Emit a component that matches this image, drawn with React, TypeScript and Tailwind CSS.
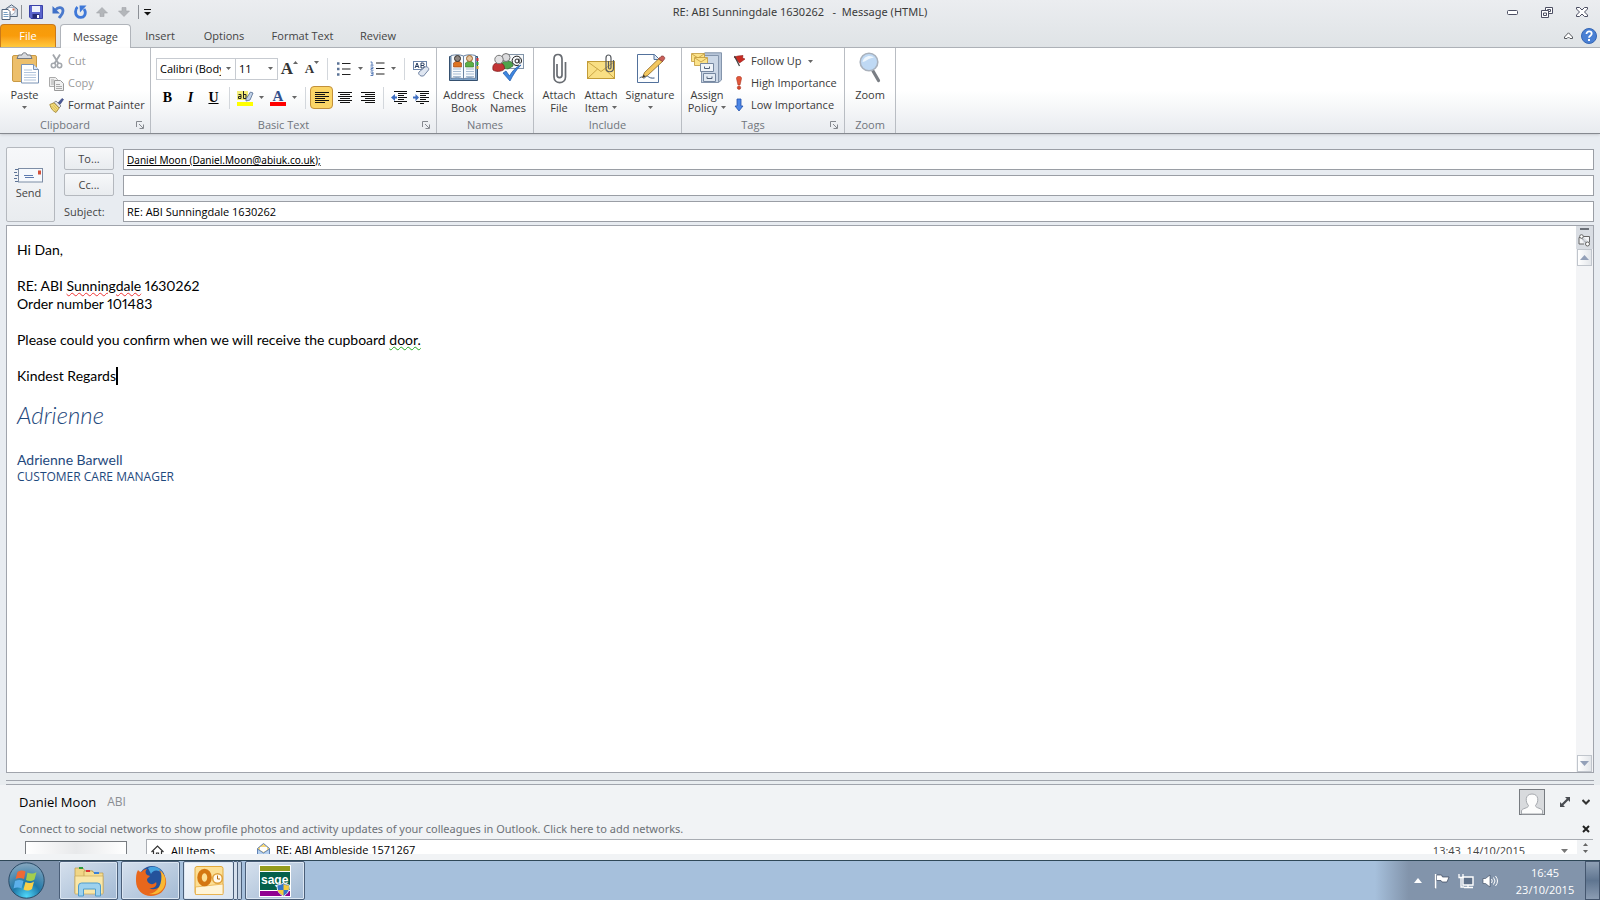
import type { ReactNode } from "react"
import clsx from "clsx"

const Caret = ({ className }: { className?: string }) => (
  <svg className={clsx("h-[3px] w-[5px] shrink-0", className)} viewBox="0 0 5 3" aria-hidden="true">
    <path d="M0 0h5L2.5 3z" fill="#666" />
  </svg>
)

const Divider = () => <span className="mx-1 h-[22px] w-px bg-[#d3d7dc]" />

const MailIcon = () => (
  <svg className="h-4 w-[17px]" viewBox="0 0 17 16" aria-hidden="true">
    <path d="M4.500 5 10.500 .8l5.800 4.200v7.500h-11z" fill="#dfe8f2" stroke="#56677c" />
    <path d="M7 3.500h7v5L10.500 11 7 8z" fill="#fff" stroke="#8694a6" strokeWidth=".7" />
    <path d="M11.500 4.500h2v2h-2z" fill="#d56a4b" />
    <path d="M1 5.500h6l2 2v8H1z" fill="#fff" stroke="#4e627b" />
    <path d="M2.500 8.500h4M2.500 10.500h5M2.500 12.500h5" stroke="#78a0c4" />
  </svg>
)

const SaveIcon = () => (
  <svg className="h-[14px] w-[14px]" viewBox="0 0 14 14" aria-hidden="true">
    <path d="M.5.5h13v13H2L.5 12z" fill="#5a64cc" stroke="#3a42a8" />
    <path d="M3 1h8v6H3z" fill="#eef2fb" />
    <path d="M3.500 9h7v4.500h-7z" fill="#262c77" />
    <path d="M8 10h2v3H8z" fill="#fff" />
  </svg>
)

const UndoIcon = () => (
  <svg className="h-[14px] w-[13px]" viewBox="0 0 13 14" aria-hidden="true">
    <path d="M3.500 5C6 1.500 11 2 11 6c0 3-2 4.500-4 7" fill="none" stroke="#4a79cc" strokeWidth="2.800" />
    <path d="M.5 1v7.500H8z" fill="#3f70c8" />
  </svg>
)

const RedoIcon = () => (
  <svg className="h-[14px] w-[13px]" viewBox="0 0 13 14" aria-hidden="true">
    <path d="M3.500 2C1 4 1 9 3 11s6 2 7.500-.5.500-5-.5-6.500" fill="none" stroke="#3f78d8" strokeWidth="2.800" />
    <path d="M5.500.5h7L6 7.500z" fill="#3f78d8" />
  </svg>
)

const ArrowBlob = ({ flip }: { flip?: boolean }) => (
  <svg className={clsx("h-[10px] w-3", flip && "rotate-180")} viewBox="0 0 12 10" aria-hidden="true">
    <path d="M6 .5 11.500 6H8v3.500H4V6H.5z" fill="#b3b6ba" stroke="#a2a5aa" strokeWidth=".6" />
  </svg>
)

const PasteIcon = () => (
  <svg className="h-8 w-8" viewBox="0 0 32 32" aria-hidden="true">
    <rect x="3.500" y="3.500" width="24" height="26" rx="1.500" fill="#edbf6b" stroke="#c99a45" />
    <path d="M8 6.500h15L21.500 3h-3.500c0-3-5-3-5 0H9.500z" fill="#d8dade" stroke="#75797f" />
    <path d="M12.500 12.500h12l5 5V31h-17z" fill="#fff" stroke="#7a93b5" />
    <path d="M24.500 12.500v5h5" fill="#dce7f5" stroke="#7a93b5" />
    <path d="M15 18h8M15 20.500h12M15 23h12M15 25.500h12M15 28h12" stroke="#b1c4dc" />
  </svg>
)

const CutIcon = () => (
  <svg className="h-[15px] w-[15px]" viewBox="0 0 15 15" aria-hidden="true">
    <path d="M4 .5 9.500 9.500M11 .5 5.500 9.500" stroke="#a3a7ac" strokeWidth="1.800" fill="none" />
    <circle cx="4.500" cy="11.500" r="2.200" fill="none" stroke="#a3a7ac" strokeWidth="1.600" />
    <circle cx="10.500" cy="11.500" r="2.200" fill="none" stroke="#a3a7ac" strokeWidth="1.600" />
  </svg>
)

const CopyIcon = () => (
  <svg className="h-[15px] w-[15px]" viewBox="0 0 15 15" aria-hidden="true">
    <path d="M.5 1.500h6l2 2v7h-8z" fill="#eee" stroke="#aaa" />
    <path d="M5.500 4.500h6l3 3v7h-9z" fill="#f1f1f1" stroke="#999" />
    <path d="M7 8.500h4M7 10.500h6M7 12.500h6M2 4h3M2 6h3M2 8h3" stroke="#aaa" />
  </svg>
)

const PainterIcon = () => (
  <svg className="h-[15px] w-[15px]" viewBox="0 0 15 15" aria-hidden="true">
    <path d="M9 5 13 .5l1.500 1L11 6.500z" fill="#4a5a9a" stroke="#333e70" strokeWidth=".6" />
    <path d="M5 4.500 7 3l5 5-2 2z" fill="#e6e6ea" stroke="#72767c" strokeWidth=".8" />
    <path d="M.8 6.500 5 4.800l5.200 5.200L7 14.500C4 13 2 11 .8 6.500z" fill="#f3dd7c" stroke="#9a7c2a" strokeWidth=".8" />
    <path d="m2.500 8 5 5M4 6.500l4.500 5" stroke="#c8a545" strokeWidth=".7" />
  </svg>
)

const Launcher = () => (
  <svg className="h-2 w-2" viewBox="0 0 8 8" aria-hidden="true">
    <path d="M.5 6V.5H6M3 3l4 4M7.500 3.500v4h-4" fill="none" stroke="#85898f" />
  </svg>
)

const BulletsIcon = () => (
  <svg className="h-[14px] w-[15px]" viewBox="0 0 15 14" aria-hidden="true">
    <path d="M1 1.500h2.500M1 7h2.500M1 12.500h2.500" stroke="#5b7396" strokeWidth="2.500" />
    <path d="M6 1.500h8.500M6 7h8.500M6 12.500h8.500" stroke="#222" strokeWidth="1.200" />
  </svg>
)

const NumbersIcon = () => (
  <svg className="h-[15px] w-[15px]" viewBox="0 0 15 15" aria-hidden="true">
    <path d="M.5 1h1.500v3M.5 4.200h3M.5 6h2.500v1.500H1v1.700h2.500M.5 11h2.500v3.500H.5M1 12.700h2" fill="none" stroke="#4a6fb0" strokeWidth=".9" />
    <path d="M6 2h8.500M6 7.500h8.500M6 13h8.500" stroke="#222" strokeWidth="1.200" />
  </svg>
)

const ClearFormatIcon = () => (
  <svg className="h-4 w-[17px]" viewBox="0 0 17 16" aria-hidden="true">
    <rect x=".5" y=".5" width="13" height="8" fill="#fff" stroke="#6a83a8" />
    <path d="m2 7 2-5 2 5M3 5.500h2M8 2v5h2c1.800 0 1.800-2.500 0-2.500H8h2C11.600 4.500 11.600 2 10 2z" fill="none" stroke="#263c60" />
    <path d="m6 11 6-5c2-1 4.500 1 3.500 3l-5 6H8c-2-1-3-2.500-2-4z" fill="#dfe6f1" stroke="#7386a5" />
  </svg>
)

const HighlightIcon = () => (
  <svg className="h-4 w-[17px]" viewBox="0 0 17 16" aria-hidden="true">
    <rect y="1" width="11" height="9" fill="#f3ee78" />
    <path d="M1.500 4.500h2.500v4H1.500V6.500H4M6.500 1v7.500H9v-4H6.500" fill="none" stroke="#222" />
    <path d="m9 9 4.500-7 2.500 1-3 7-4 1z" fill="#c3d3e8" stroke="#51698f" strokeWidth=".8" />
    <rect y="12" width="16" height="4" fill="#ff0" />
  </svg>
)

const AlignIcon = ({ mode }: { mode: "left" | "center" | "right" }) => (
  <svg className="h-3 w-[14px]" viewBox="0 0 14 12" aria-hidden="true">
    <path
      d={
        mode === "left"
          ? "M0 .5h14M0 2.500h10M0 4.500h14M0 6.500h10M0 8.500h14M0 10.500h10"
          : mode === "center"
            ? "M0 .5h14M2 2.500h10M0 4.500h14M2 6.500h10M0 8.500h14M2 10.500h10"
            : "M0 .5h14M4 2.500h10M0 4.500h14M4 6.500h10M0 8.500h14M4 10.500h10"
      }
      stroke="#111"
    />
  </svg>
)

const IndentIcon = ({ out }: { out?: boolean }) => (
  <svg className="h-[13px] w-4" viewBox="0 0 16 13" aria-hidden="true">
    <path d="M3 .5h13M7 2.500h9M7 4.500h6M7 6.500h9M7 8.500h6M3 10.500h13M7 12.500h4" stroke="#111" />
    <path d={out ? "M0 6.500 4 3v2.500h2v2H4V10z" : "M6 6.500 2.500 3v2.500H0v2h2.500V10z"} fill="#3c6cc0" />
  </svg>
)

const AddressBookIcon = () => (
  <svg className="h-8 w-8" viewBox="0 0 32 32" aria-hidden="true">
    <path d="M1.500 4.500h28v24h-28z" fill="#7da2c9" stroke="#35506f" />
    <path d="M3 3.500c5-1 9-1 12.500.5 3-1.500 8-1.500 12-.5v23c-4-1-9-1-12 .5-3.500-1.500-8-1.500-12.500-.5z" fill="#f7fafd" stroke="#6b84a2" />
    <path d="M15.500 4v23" stroke="#6b84a2" />
    <path d="M5 17h8M5 19.500h8M5 22h8M5 24.500h8M18 17h8M18 19.500h8M18 22h8M18 24.500h8" stroke="#a9bdd3" />
    <path d="M5.500 15v-4l3-2h2l3 2v4z" fill="#dd7321" stroke="#933d0d" strokeWidth=".6" />
    <circle cx="9.500" cy="6.500" r="3" fill="#8d8580" stroke="#33302d" />
    <path d="M17.500 15v-4l3-2h2l3 2v4z" fill="#5cae45" stroke="#2b7121" strokeWidth=".6" />
    <circle cx="21.500" cy="6.500" r="3" fill="#e5c39a" stroke="#9a642c" />
    <path d="M28.500 6h2v3h-2z" fill="#c33" />
    <path d="M28.500 10h2v3h-2z" fill="#3a3" />
    <path d="M28.500 14h2v3h-2z" fill="#dda52c" />
  </svg>
)

const CheckNamesIcon = () => (
  <svg className="h-8 w-8" viewBox="0 0 32 32" aria-hidden="true">
    <rect x="15.500" y="2.500" width="16" height="14" fill="#f5f8fb" stroke="#8294a8" />
    <path d="M9 16c0-6 3-7 6-7s6 1 6 5l-5 3z" fill="#4fa34c" stroke="#2c6a2b" strokeWidth=".7" />
    <circle cx="14" cy="5.500" r="4" fill="#dcdcde" stroke="#777" />
    <path d="M1 18c-1-6 2-7 5.500-7s6 1 6 6c-3 3-9 3-11.500 1z" fill="#c23434" stroke="#7b1818" strokeWidth=".7" />
    <circle cx="7" cy="7.500" r="4.200" fill="#e2e2e4" stroke="#777" />
    <circle cx="25" cy="9" r="2" fill="none" stroke="#222" />
    <path d="M27 6.500v4c0 1.500 2.500 1 2.500-1.500a4.700 4.700 0 1 0-2.500 4" fill="none" stroke="#222" />
    <path d="m11 21 3-2 3.500 5C20 19 24 15 29 13c-5 5-8 10-11 16z" fill="#3e86e0" stroke="#2059a8" strokeWidth=".7" />
  </svg>
)

const ClipIcon = () => (
  <svg className="h-8 w-8" viewBox="0 0 32 32" aria-hidden="true">
    <path d="M14 12v11c0 3.500 5 3.500 5 0V7c0-6-8-6-8 0v18c0 7.500 11.500 7.500 11.500 0V10" fill="none" stroke="#686c72" strokeWidth="1.700" />
  </svg>
)

const AttachItemIcon = () => (
  <svg className="h-8 w-8" viewBox="0 0 32 32" aria-hidden="true">
    <rect x="2.500" y="9.500" width="27" height="17" fill="#f9df84" stroke="#c29c38" />
    <path d="m3 10 13 9.500L29 10M3 26l9.500-9M29 26l-9.500-9" fill="none" stroke="#cba645" />
    <path d="M23.500 9v6.500c0 2 2.500 2 2.500 0V6c0-4-5-4-5 0v10c0 5 7.500 5 7.500 0V8" fill="none" stroke="#55595f" strokeWidth="1.200" />
  </svg>
)

const SignatureIcon = () => (
  <svg className="h-8 w-8" viewBox="0 0 32 32" aria-hidden="true">
    <path d="M3.500 2.500h17l4 4v24h-21z" fill="#fdfeff" stroke="#52719c" />
    <path d="M20 2.500v5h4.500" fill="#dce8f5" stroke="#52719c" />
    <path d="M5.500 26c4-3 3 2 6-1s2 2 9 1" fill="none" stroke="#33507c" />
    <path d="m8.500 25.500 2-5L25.500 6l3.500 3-15.500 14.500z" fill="#f4c860" stroke="#8b6420" strokeWidth=".8" />
    <path d="m24.500 7 2.500-2.500c2-1.500 4.500.8 3.500 2.500L28.500 9.500z" fill="#ca5f59" stroke="#7d3330" strokeWidth=".7" />
    <path d="m8.500 25.500 1-3 2 2z" fill="#333" />
  </svg>
)

const PolicyIcon = () => (
  <svg className="h-8 w-8" viewBox="0 0 32 32" aria-hidden="true">
    <path d="M10.500 3 14 .8h16.500V28l-3 2.500h-17z" fill="#b7c5d8" stroke="#8495ac" />
    <path d="M10.500 3.500h17v27h-17z" fill="#cbd7e6" stroke="#8495ac" />
    <path d="M.5 1.500h13v8H.5z" fill="#fbe28a" stroke="#c0983a" strokeWidth=".8" />
    <path d="m1 2 6 4 6-4" fill="none" stroke="#c0983a" strokeWidth=".8" />
    <path d="M3.500 5.500h13v8h-13z" fill="#fbe28a" stroke="#c0983a" strokeWidth=".8" />
    <path d="m4 6 6 4 6-4" fill="none" stroke="#c0983a" strokeWidth=".8" />
    <path d="M9.500 11.500h13v8h-13z" fill="#eff4f9" stroke="#7587a0" />
    <path d="M12.500 21.500h12v8h-12z" fill="#e2eaf3" stroke="#7587a0" />
    <path d="M13.500 14.500v2h5v-2M16 24.500v2h5v-2" fill="none" stroke="#51627a" />
  </svg>
)

const FlagIcon = () => (
  <svg className="h-[14px] w-[14px]" viewBox="-1 0 14 14" aria-hidden="true">
    <path d="M0 3 4 2l5-.5L8.500 4l2.500 1-5.500 4z" fill="#c92b22" stroke="#8f1a15" strokeWidth=".6" />
    <path d="m.5 2 5 10" stroke="#444" strokeWidth="1.200" />
  </svg>
)

const HighIcon = () => (
  <svg className="h-[14px] w-[14px]" viewBox="-1 0 14 14" aria-hidden="true">
    <path d="M2.500 2.500c0-3 5-3 5 0L6 9H4z" fill="#e2573a" stroke="#a83420" strokeWidth=".6" />
    <circle cx="5" cy="11.700" r="1.700" fill="#d5482e" stroke="#a83420" strokeWidth=".6" />
  </svg>
)

const LowIcon = () => (
  <svg className="h-[14px] w-[14px]" viewBox="-1 0 14 14" aria-hidden="true">
    <path d="M3 1h4v7h2L5 13 1 8h2z" fill="#4c86e6" stroke="#2352ab" strokeWidth=".8" />
  </svg>
)

const ZoomIcon = () => (
  <svg className="h-8 w-8" viewBox="0 0 32 32" aria-hidden="true">
    <path d="m19 19 5.500 9.500" stroke="#7a7e84" strokeWidth="3.200" strokeLinecap="round" />
    <circle cx="15" cy="10" r="8.800" fill="#bfd9f4" stroke="#a9b1bc" strokeWidth="1.600" />
    <path d="M8.500 10c1-6 8-8 12-4-5-1-8 4-12 4z" fill="#eef6fd" />
  </svg>
)

const SendIcon = () => (
  <svg className="h-[15px] w-[29px]" viewBox="0 0 29 15" aria-hidden="true">
    <path d="M1 1.500h3M0 4.500h3M1 7.500h3M0 10.500h3M1 13.500h3" stroke="#5d7396" />
    <rect x="4.500" y=".5" width="24" height="13.500" fill="#f6f9fd" stroke="#7d8da5" />
    <path d="M24 2.500h3v4h-3z" fill="#d3503a" />
    <path d="M10 7.500h9M11 9.500h9" stroke="#5d7bb0" />
  </svg>
)

type LargeButtonProps = { icon: ReactNode; lines: string[]; menu?: boolean; className: string }

const LargeButton = ({ icon, lines, menu, className }: LargeButtonProps) => (
  <button type="button" className={clsx("flex flex-col items-center pt-0.5 leading-[13px]", className)}>
    {icon}
    <span className="mt-1">{lines[0]}</span>
    <span className="flex h-[13px] items-center gap-1">
      {lines[1]}
      {menu && <Caret />}
    </span>
  </button>
)

const SmallButton = ({ icon, label, menu, disabled }: { icon: ReactNode; label: string; menu?: boolean; disabled?: boolean }) => (
  <button
    type="button"
    disabled={disabled}
    className={clsx("flex h-[22px] items-center gap-1 whitespace-nowrap", disabled && "text-[#9a9a9a]")}
  >
    {icon}
    {label}
    {menu && <Caret className="ml-0.5" />}
  </button>
)

const IconButton = ({ label, children, className }: { label: string; children: ReactNode; className: string }) => (
  <button type="button" aria-label={label} className={clsx("flex h-[23px] items-center justify-center", className)}>
    {children}
  </button>
)

type GroupProps = { title: string; className: string; launcher?: boolean; children: ReactNode }

const Group = ({ title, className, launcher, children }: GroupProps) => (
  <section className={clsx("flex shrink-0 flex-col border-r border-[#b9bdc3]", className)} aria-label={title}>
    <div className="flex h-[68px] pt-0.5">{children}</div>
    <div className="flex h-[17px] items-center text-[#70757c]">
      <span className="flex-1 text-center">{title}</span>
      {launcher && (
        <button type="button" aria-label={`${title} settings`} className="flex w-5 justify-center">
          <Launcher />
        </button>
      )}
    </div>
  </section>
)

const TitleBar = () => (
  <div className="grid h-6 grid-cols-[1fr_auto_1fr] items-center text-[#3b3b3b]">
    <div className="flex items-center">
      <span className="flex w-[18px] justify-center"><MailIcon /></span>
      <span className="ml-[3px] h-[14px] w-px bg-[#8c9096]" />
      <IconButton label="Save" className="ml-[3px] w-[22px]"><SaveIcon /></IconButton>
      <IconButton label="Undo" className="w-[22px]"><UndoIcon /></IconButton>
      <IconButton label="Redo" className="w-[22px]"><RedoIcon /></IconButton>
      <IconButton label="Previous item" className="w-[22px]"><ArrowBlob /></IconButton>
      <IconButton label="Next item" className="w-[22px]"><ArrowBlob flip /></IconButton>
      <span className="ml-[3px] h-[14px] w-px bg-[#8c9096]" />
      <IconButton label="Customize toolbar" className="w-4">
        <svg className="h-[7px] w-[7px]" viewBox="0 0 7 7" aria-hidden="true">
          <path d="M0 .5h7" stroke="#111" />
          <path d="M0 3h7L3.500 6.500z" fill="#111" />
        </svg>
      </IconButton>
    </div>
    <h1 className="whitespace-pre font-['Noto_Sans',sans-serif]">RE: ABI Sunningdale 1630262   -  Message (HTML)</h1>
    <div className="flex items-center justify-end">
      <IconButton label="Minimize" className="w-[34px]">
        <svg className="h-[5px] w-[11px]" viewBox="0 0 11 5"><rect x=".5" y=".5" width="10" height="4" rx="1" fill="#fff" stroke="#4c4f63" /></svg>
      </IconButton>
      <IconButton label="Restore" className="w-[35px]">
        <svg className="h-[11px] w-3" viewBox="0 0 12 11">
          <path d="M4.500.5h7v6h-7z" fill="#fff" stroke="#4c4f63" />
          <path d="M6.500 2.500h3v2h-3z" fill="none" stroke="#4c4f63" />
          <path d="M.5 3.500h7v7h-7z" fill="#fff" stroke="#4c4f63" />
          <path d="M2.500 6h3v2.500h-3z" fill="none" stroke="#4c4f63" />
        </svg>
      </IconButton>
      <IconButton label="Close" className="w-9">
        <svg className="h-[10px] w-3" viewBox="0 0 12 10">
          <path d="M.5.5h3L6 3 8.500.5h3v1.500L8.500 5l3 3v1.500h-3L6 7 3.500 9.500h-3V8l3-3-3-3z" fill="#fff" stroke="#4c4f63" />
        </svg>
      </IconButton>
    </div>
  </div>
)

const tabs = [
  { name: "Insert", width: "w-[58px]" },
  { name: "Options", width: "w-[70px]" },
  { name: "Format Text", width: "w-[87px]" },
  { name: "Review", width: "w-[64px]" },
]

const TabBar = () => (
  <nav className="flex h-6 items-stretch border-b border-[#b0b4ba] text-[#444]">
    <button
      type="button"
      className="w-14 rounded-t-sm border border-b-0 border-[#c9791a] bg-linear-to-b from-[#f59b0b] via-[#f99c0a] to-[#ffc93c] text-white"
    >
      File
    </button>
    <button type="button" className="-mb-px ml-1 w-[71px] rounded-t-sm border border-b-0 border-[#b0b4ba] bg-white">
      Message
    </button>
    {tabs.map((tab) => (
      <button key={tab.name} type="button" className={tab.width}>
        {tab.name}
      </button>
    ))}
    <div className="ml-auto flex items-center gap-2 pr-[3px]">
      <button type="button" aria-label="Minimize the ribbon">
        <svg className="h-[7px] w-[9px]" viewBox="0 0 9 7"><path d="M.5 5 4.500.8 8.500 5v1.500H6L4.500 5 3 6.500H.5z" fill="#fff" stroke="#55585e" /></svg>
      </button>
      <button type="button" aria-label="Help">
        <svg className="h-4 w-4" viewBox="0 0 16 16">
          <circle cx="8" cy="8" r="7.500" fill="#4a80d4" stroke="#3566b4" />
          <path d="M5.500 6c0-3.500 5.200-3.200 5.200-.2C10.700 7.700 8 7.700 8 9.800" fill="none" stroke="#fff" strokeWidth="1.800" />
          <path d="M7 11h2v2H7z" fill="#fff" />
        </svg>
      </button>
    </div>
  </nav>
)

const FontControls = () => (
  <div className="flex flex-col pl-[5px] pt-[7px]">
    <div className="flex h-[23px] items-center">
      <span className="relative flex">
        <select aria-label="Font" className="h-[22px] w-20 appearance-none overflow-hidden border border-[#c7cbd1] bg-white pl-[3px] pr-3.5 text-black">
          <option>Calibri (Body)</option>
        </select>
        <Caret className="pointer-events-none absolute right-[5px] top-[9px]" />
      </span>
      <span className="relative flex">
        <select aria-label="Font size" className="-ml-px h-[22px] w-[43px] appearance-none border border-[#c7cbd1] bg-white pl-[3px] text-black">
          <option>11</option>
        </select>
        <Caret className="pointer-events-none absolute right-[5px] top-[9px]" />
      </span>
      <IconButton label="Grow font" className="w-[23px] font-['Liberation_Serif'] text-[17px] font-bold text-[#333]">
        A<Caret className="mb-3 rotate-180" />
      </IconButton>
      <IconButton label="Shrink font" className="w-[22px] font-['Liberation_Serif'] text-[13px] font-bold text-[#333]">
        A<Caret className="mb-3" />
      </IconButton>
      <Divider />
      <IconButton label="Bullets" className="w-[22px]"><BulletsIcon /></IconButton>
      <Caret className="mx-1" />
      <IconButton label="Numbering" className="w-5"><NumbersIcon /></IconButton>
      <Caret className="mx-1" />
      <Divider />
      <IconButton label="Clear formatting" className="w-6"><ClearFormatIcon /></IconButton>
    </div>
    <div className="mt-1.5 flex h-[23px] items-center text-black">
      <IconButton label="Bold" className="w-[23px] font-['Liberation_Serif'] text-[14px] font-bold">B</IconButton>
      <IconButton label="Italic" className="w-[23px] font-['Liberation_Serif'] text-[14px] font-bold italic">I</IconButton>
      <IconButton label="Underline" className="w-[23px] font-['Liberation_Serif'] text-[14px] font-bold underline">U</IconButton>
      <Divider />
      <IconButton label="Highlight" className="w-[22px]"><HighlightIcon /></IconButton>
      <Caret className="mr-1 ml-[3px]" />
      <IconButton label="Font colour" className="w-5">
        <span className="w-4 border-b-4 border-[#f00] text-center font-['Liberation_Serif'] text-[15px] font-bold leading-3 text-[#33508c]">A</span>
      </IconButton>
      <Caret className="mx-1" />
      <Divider />
      <IconButton label="Align left" className="w-[23px] rounded-sm border border-[#c2903a] bg-[#fbd566]"><AlignIcon mode="left" /></IconButton>
      <IconButton label="Centre" className="w-[23px]"><AlignIcon mode="center" /></IconButton>
      <IconButton label="Align right" className="w-[23px]"><AlignIcon mode="right" /></IconButton>
      <Divider />
      <IconButton label="Decrease indent" className="w-[22px]"><IndentIcon out /></IconButton>
      <IconButton label="Increase indent" className="w-[22px]"><IndentIcon /></IconButton>
    </div>
  </div>
)

const Ribbon = () => (
  <div className="flex h-[86px] shrink-0 border-b border-[#85898f] bg-linear-to-b from-white via-white to-[#e8ebef] shadow-sm">
    <Group title="Clipboard" className="w-[151px]" launcher>
      <LargeButton icon={<PasteIcon />} lines={["Paste"]} menu className="w-[49px]" />
      <div>
        <SmallButton icon={<CutIcon />} label="Cut" disabled />
        <SmallButton icon={<CopyIcon />} label="Copy" disabled />
        <SmallButton icon={<PainterIcon />} label="Format Painter" />
      </div>
    </Group>
    <Group title="Basic Text" className="w-[286px]" launcher>
      <FontControls />
    </Group>
    <Group title="Names" className="w-[97px]">
      <LargeButton icon={<AddressBookIcon />} lines={["Address", "Book"]} className="ml-1 w-[46px]" />
      <LargeButton icon={<CheckNamesIcon />} lines={["Check", "Names"]} className="w-[42px]" />
    </Group>
    <Group title="Include" className="w-[148px]">
      <LargeButton icon={<ClipIcon />} lines={["Attach", "File"]} className="ml-1 w-[42px]" />
      <LargeButton icon={<AttachItemIcon />} lines={["Attach", "Item"]} menu className="w-[42px]" />
      <LargeButton icon={<SignatureIcon />} lines={["Signature"]} menu className="w-[56px]" />
    </Group>
    <Group title="Tags" className="w-[163px]" launcher>
      <LargeButton icon={<PolicyIcon />} lines={["Assign", "Policy"]} menu className="ml-1 w-[42px]" />
      <div className="pl-[5px]">
        <SmallButton icon={<FlagIcon />} label="Follow Up" menu />
        <SmallButton icon={<HighIcon />} label="High Importance" />
        <SmallButton icon={<LowIcon />} label="Low Importance" />
      </div>
    </Group>
    <Group title="Zoom" className="w-[51px]">
      <LargeButton icon={<ZoomIcon />} lines={["Zoom"]} className="w-[50px]" />
    </Group>
  </div>
)

const fieldClass = "h-[21px] min-w-0 flex-1 border border-[#9a9ea5] bg-white px-[3px] text-black outline-none"
const addressButtonClass = "h-[23px] w-[50px] rounded-xs border border-[#b4b8be] bg-linear-to-b from-[#f7f8fa] to-[#e9ecef]"

const AddressFields = () => (
  <div className="flex shrink-0 pl-1.5 pr-1.5 pt-[13px] text-[#444]">
    <button
      type="button"
      className="flex w-[49px] flex-col items-center justify-center gap-0.5 rounded-xs border border-[#b4b8be] bg-linear-to-b from-[#f7f8fa] to-[#e9ecef] pr-1"
    >
      <SendIcon />
      Send
    </button>
    <div className="ml-[9px] flex flex-1 flex-col gap-[3px]">
      <div className="flex items-end gap-[9px]">
        <button type="button" className={addressButtonClass}>To...</button>
        <input
          aria-label="To"
          className={clsx(fieldClass, "font-['Noto_Sans',sans-serif] text-[10px] underline")}
          defaultValue="Daniel Moon (Daniel.Moon@abiuk.co.uk);"
        />
      </div>
      <div className="flex items-end gap-[9px]">
        <button type="button" className={addressButtonClass}>Cc...</button>
        <input aria-label="Cc" className={fieldClass} />
      </div>
      <div className="flex h-[23px] items-end gap-[9px]">
        <label htmlFor="subject" className="w-[50px] leading-[21px]">Subject:</label>
        <input id="subject" className={fieldClass} defaultValue="RE: ABI Sunningdale 1630262" />
      </div>
    </div>
  </div>
)

const ScrollArrow = ({ label, up }: { label: string; up?: boolean }) => (
  <button
    type="button"
    aria-label={label}
    className="flex h-[17px] w-[15px] items-center justify-center border border-[#c0c5cc] bg-linear-to-r from-white to-[#e3e6ea]"
  >
    <svg className={clsx("h-[5px] w-[9px]", !up && "rotate-180")} viewBox="0 0 9 5"><path d="M4.500 0 9 5H0z" fill="#93a0b8" /></svg>
  </button>
)

const MessageBody = () => (
  <main className="mx-1.5 mt-[3px] flex min-h-0 flex-1 border border-[#a0a4ac] bg-white">
    <div className="flex-1 overflow-hidden pl-2.5 pt-[15px] font-['Lato','Liberation_Sans',sans-serif] text-[14px] leading-[18px] text-black proportional-nums">
      <p>Hi Dan,</p>
      <p className="mt-[18px]">
        RE: ABI <span className="underline decoration-[#e33] decoration-wavy decoration-1">Sunningdale</span> 1630262
      </p>
      <p>Order number 101483</p>
      <p className="mt-[18px]">
        Please could you confirm when we will receive the cupboard{" "}
        <span className="underline decoration-[#2a2] decoration-wavy decoration-1">door.</span>
      </p>
      <p className="mt-[18px] flex">
        Kindest Regards
        <span className="w-0.5 bg-black" />
      </p>
      <p className="mt-[18px] text-[24px] font-light italic leading-6 text-[#1f497d]">Adrienne</p>
      <p className="mt-6 leading-[17px] text-[#1f497d]">Adrienne Barwell</p>
      <p className="font-['Open_Sans',sans-serif] text-[12px] leading-[17px] text-[#1f497d]">CUSTOMER CARE MANAGER</p>
    </div>
    <div className="flex w-[17px] flex-col items-center bg-[#f3f4f6]">
      <div className="flex h-[23px] w-full flex-col items-center gap-1 bg-[#d9dde3] pt-0.5">
        <span className="h-0.5 w-[9px] bg-[#6b7078]" />
        <svg className="h-[13px] w-[13px]" viewBox="0 0 13 13" aria-hidden="true">
          <path d="M3 3.500H1v6.500h5M5 2.500h6.500v6" fill="#f4f5f7" stroke="#666" />
          <path d="m3.500 4 6 6" stroke="#666" strokeDasharray="1 1" />
          <circle cx="3.500" cy="2.500" r="1.800" fill="#fff" stroke="#666" />
          <circle cx="9.500" cy="10" r="2" fill="#fff" stroke="#666" />
        </svg>
      </div>
      <ScrollArrow label="Scroll up" up />
      <span className="flex-1" />
      <ScrollArrow label="Scroll down" />
    </div>
  </main>
)

const PeoplePane = () => (
  <div className="shrink-0 bg-[#f1f3f5]">
    <div className="h-[7px] bg-[#e8ecef]" />
    <div className="bg-[#e8ecef] px-1.5">
      <div className="h-[5px] border-y border-[#a0a4ac]" />
    </div>
    <div className="flex h-[34px] items-center pl-[19px] pr-2.5">
      <span className="text-[13px] text-black">Daniel Moon</span>
      <span className="ml-[11px] text-[12px] text-[#8a8d92]">ABI</span>
      <svg className="ml-auto h-[26px] w-[26px]" viewBox="0 0 26 26" aria-label="Contact photo">
        <rect x=".5" y=".5" width="25" height="25" fill="#d8dadd" stroke="#777b80" />
        <path d="M2.500 25v-3c0-3 7-2.500 7-5.500C6 13 6 5 13 5s7 8 3.500 11.500c0 3 7 2.500 7 5.500v3z" fill="#fcfcfc" stroke="#a5a8ad" />
      </svg>
      <button type="button" aria-label="Expand pane" className="ml-[15px]">
        <svg className="h-[10px] w-[10px]" viewBox="0 0 10 10"><path d="M5 0h5v5L8.300 3.300 3.300 8.300 5 10H0V5l1.700 1.700 5-5z" fill="#4a4d52" /></svg>
      </button>
      <button type="button" aria-label="Collapse pane" className="ml-3">
        <svg className="h-[6px] w-2" viewBox="0 0 8 6"><path d="m.5 1 3.500 3.500L7.500 1" fill="none" stroke="#333" strokeWidth="2" /></svg>
      </button>
    </div>
    <div className="flex h-5 items-center pl-[19px] pr-2.5 font-['Noto_Sans',sans-serif] text-[#6d7177]">
      <a href="#networks">
        Connect to social networks to show profile photos and activity updates of your colleagues in Outlook. Click here to add networks.
      </a>
      <button type="button" aria-label="Dismiss" className="ml-auto">
        <svg className="h-2 w-2" viewBox="0 0 8 8"><path d="m1 1 6 6M7 1 1 7" stroke="#222" strokeWidth="2" /></svg>
      </button>
    </div>
    <div className="flex h-[15px] overflow-hidden pr-[7px] text-black">
      <div className="ml-[25px] mt-0.5 h-5 w-[102px] border border-[#777b80] bg-linear-to-r from-white via-[#e8e9eb] to-white" />
      <div className="ml-[19px] flex h-6 flex-1 items-start border-l border-t border-[#a8acb2] bg-white">
        <svg className="ml-1 mt-[5px] h-3 w-[13px]" viewBox="0 0 13 12" aria-hidden="true">
          <path d="M.5 7 6.500 1l6 6M2.500 6v6M10.500 6v6M5.500 12V8h2v4" fill="none" stroke="#333" strokeWidth="1.200" />
        </svg>
        <span className="ml-[7px] w-[86px] leading-[22px]">All Items</span>
        <svg className="mt-[3px] h-3 w-[13px]" viewBox="0 0 13 12" aria-hidden="true">
          <path d="M.5 5.500 6.500.5l6 5v6H.5z" fill="#f7d777" stroke="#6282b3" />
          <path d="M3 4h7v3L6.500 9 3 7z" fill="#fff" />
          <path d="m.5 6 6 4 6-4v6H.5z" fill="#b5d1f0" stroke="#6282b3" />
        </svg>
        <span className="ml-[6px] leading-[19px]">RE: ABI Ambleside 1571267</span>
        <span className="ml-auto whitespace-pre leading-[22px] text-[#444]">13:43  14/10/2015</span>
        <svg className="ml-9 mr-[9px] mt-[9px] h-1 w-[7px]" viewBox="0 0 7 4" aria-hidden="true"><path d="M0 0h7L3.500 4z" fill="#777" /></svg>
        <div className="flex h-full w-4 flex-col items-center gap-1 bg-[#f1f3f5] pt-[3px]">
          <Caret className="rotate-180" />
          <Caret />
        </div>
      </div>
    </div>
    <div className="h-1.5" />
  </div>
)

const taskClass =
  "flex h-[39px] items-center justify-center rounded-xs border border-[#4a5e78] bg-linear-to-br from-[#d5e0ed] to-[#a3bad4] shadow-[inset_0_0_0_1px_#dbe6f2]"

const Taskbar = () => (
  <footer className="flex h-10 shrink-0 border-t border-[#2f4858] bg-[#a6c0dc] text-white">
    <div className="flex w-[59px] items-center bg-[#7f93ac] pl-2">
      <button type="button" aria-label="Start">
        <svg className="h-[37px] w-[37px]" viewBox="0 0 37 37">
          <defs>
            <radialGradient id="orb" cx=".5" cy=".95" r=".9">
              <stop offset="0" stopColor="#4fd8fa" />
              <stop offset=".45" stopColor="#1f78a8" />
              <stop offset="1" stopColor="#7fa3bd" />
            </radialGradient>
          </defs>
          <circle cx="18.500" cy="18.500" r="17.700" fill="url(#orb)" stroke="#2b4c68" />
          <path d="M9.500 10c3-2 5.500-2 8-.5L16 17c-3-1.500-5.500-1.500-8.500 0z" fill="#ee6a35" />
          <path d="M19.500 10.500c3 1.500 6 1.500 9-.5L26.500 17.500c-3 2-6 2-8.500.5z" fill="#a3ce4e" />
          <path d="M7 19c3-1.500 5.500-1.500 8.500 0L13.500 26.500c-2.500-1.500-5.500-1.500-8 0z" fill="#5cb0ea" />
          <path d="M17.500 20c3 1.500 5.500 1.500 8.500-.5L24 27c-3 2-6 2-8.500.5z" fill="#fbd048" />
        </svg>
      </button>
    </div>
    <div className="flex gap-[3px]">
      <button type="button" aria-label="Windows Explorer" className={clsx(taskClass, "w-[59px]")}>
        <svg className="h-8 w-8" viewBox="0 0 32 32">
          <path d="M2 3h8l2 3h8v22H2z" fill="#f0d686" stroke="#b99a48" strokeWidth=".7" />
          <path d="M6 3h4" stroke="#2a9b3c" strokeWidth="2" />
          <path d="M11 6h8l2 2h9v20H11z" fill="#f5dd92" stroke="#b99a48" strokeWidth=".7" />
          <path d="M13 6h4" stroke="#d33" strokeWidth="2" />
          <path d="M21 8h5" stroke="#3b82d8" strokeWidth="2" />
          <path d="M2 11h28v18H2z" fill="#f9e7a9" stroke="#c8a95a" strokeWidth=".7" />
          <path d="M5.500 31V21q0-3 3-3h16q3 0 3 3v10h-5v-7h-12v7z" fill="#9dd1ee" stroke="#4f9ccc" />
        </svg>
      </button>
      <button type="button" aria-label="Firefox" className={clsx(taskClass, "w-[59px]")}>
        <svg className="h-8 w-8" viewBox="0 0 32 32">
          <circle cx="17" cy="14" r="13" fill="#24529b" />
          <path d="M13 3c6-3 13 0 15 6-5-5-10-4-12 0z" fill="#47a4df" />
          <path d="M3 5c1 1 2 2 3.500 2C8 5 10 4 12 4c-2 2-2 4 0 6l3 1-3 3c0 5 6 7 9 3 2 4-3 7-7 6 5 3 12 0 13-6 1-5-1-9-3-12 5 3 8 8 7 14-1 7-7 12-15 12S1 25 1 16C1 12 1 8 3 5z" fill="#e8671c" />
          <path d="M26 6c5 5 6 12 2 18-4 5-9 6-14 5 9-1 14-10 12-23z" fill="#f9b934" />
        </svg>
      </button>
      <div className="flex">
        <button type="button" aria-label="Outlook" className={clsx(taskClass, "w-[51px] from-[#f4f7fb] to-[#dbe5f0]")}>
          <svg className="h-8 w-8" viewBox="0 0 32 32">
            <rect x="2" y="1.500" width="28" height="28" rx="2" fill="#fcdf95" stroke="#e3a93a" />
            <path d="M2.500 22 30 19v10.500H2.500z" fill="#fff5d8" stroke="#e5a83a" strokeWidth=".7" />
            <ellipse cx="11.500" cy="12.500" rx="5" ry="6.500" fill="none" stroke="#d47712" strokeWidth="4.500" />
            <circle cx="24.500" cy="13.500" r="4.800" fill="#fffaf0" stroke="#dfa13a" strokeWidth="1.500" />
            <path d="M24.500 10.500v3.500H27" fill="none" stroke="#b26b13" />
          </svg>
        </button>
        <span className="h-[39px] w-1 rounded-r-xs border border-l-0 border-[#4a5e78] bg-[#d5e0ed]" />
        <span className="h-[39px] w-1 rounded-r-xs border border-l-0 border-[#4a5e78] bg-[#c2d1e2]" />
      </div>
      <button type="button" aria-label="Sage" className={clsx(taskClass, "w-[60px]")}>
        <svg className="h-8 w-8" viewBox="0 0 32 32">
          <path d="M0 0h32v32H0z" fill="#fff" />
          <path d="M1 1h30v5H1z" fill="#949c1c" />
          <path d="M1 7h30v18H1z" fill="#05604b" />
          <path d="M1 26h30v5H1z" fill="#900090" />
          <text x="2" y="19" fill="#fff" fontFamily="Liberation Sans" fontSize="12" fontWeight="bold">sage</text>
          <path d="M18 20q3.500 0 6.500-2 3 2 6 2c0 6-2 9-6 11-4.500-2-6.500-5-6.500-11z" fill="#3575c9" stroke="#dfe8f2" />
          <path d="M24.500 19q2.500 1.500 5.500 1.500 0 2.500-.5 4.500h-5zM18.500 25h6v5.500q-4.500-2-6-5.500z" fill="#f5cc3d" />
        </svg>
      </button>
    </div>
    <div className="ml-auto flex items-center bg-linear-to-r from-[#a6c0dc] via-[#8294ab] via-15% to-[#8294ab]">
      <button type="button" aria-label="Show hidden icons" className="ml-[39px]">
        <svg className="h-[5px] w-2" viewBox="0 0 8 5"><path d="M4 0 8 5H0z" fill="#fff" /></svg>
      </button>
      <button type="button" aria-label="Action centre" className="ml-3">
        <svg className="h-4 w-4" viewBox="0 0 16 16">
          <path d="M1 1v15M2.500 2h5l1 2H15l-2 5H8L7 7.500H2.500z" fill="#fff" stroke="#36445a" strokeWidth=".7" />
          <path d="M1.500 1v14.500" stroke="#fff" strokeWidth="1.600" />
        </svg>
      </button>
      <button type="button" aria-label="Network" className="ml-2">
        <svg className="h-4 w-4" viewBox="0 0 16 16">
          <path d="M5 4h10v8H5z" fill="#5f7189" stroke="#fff" strokeWidth="1.400" />
          <path d="M6 14.500h9M10 12v2M1 1v3.500h4V1M3 5v9h3" fill="none" stroke="#fff" strokeWidth="1.300" />
        </svg>
      </button>
      <button type="button" aria-label="Volume" className="ml-2">
        <svg className="h-4 w-4" viewBox="0 0 16 16">
          <path d="M1 5.500h2.500L8 2v12l-4.500-3.500H1z" fill="#fff" stroke="#36445a" strokeWidth=".6" />
          <path d="M9.500 6q1.500 2 0 4M11.500 4.500q3 3.500 0 7M13.500 3q4 5 0 10" fill="none" stroke="#fff" />
        </svg>
      </button>
      <div className="ml-4 w-[62px] text-center leading-[17px]">
        <div>16:45</div>
        <div>23/10/2015</div>
      </div>
      <button
        type="button"
        aria-label="Show desktop"
        className="ml-[9px] h-full w-[15px] border border-[#44566e] bg-linear-to-b from-[#8fa0b5] via-[#5f7590] to-[#8c9db3]"
      />
    </div>
  </footer>
)

const App = () => (
  <div className="flex h-screen flex-col overflow-hidden bg-[#e8ecf1] font-['Open_Sans','Noto_Sans',sans-serif] text-[11px] leading-4 text-[#3b3b3b]">
    <header className="shrink-0 bg-linear-to-b from-[#ebedf0] to-[#dfe3e6]">
      <TitleBar />
      <TabBar />
    </header>
    <Ribbon />
    <AddressFields />
    <MessageBody />
    <PeoplePane />
    <Taskbar />
  </div>
)

export default App
